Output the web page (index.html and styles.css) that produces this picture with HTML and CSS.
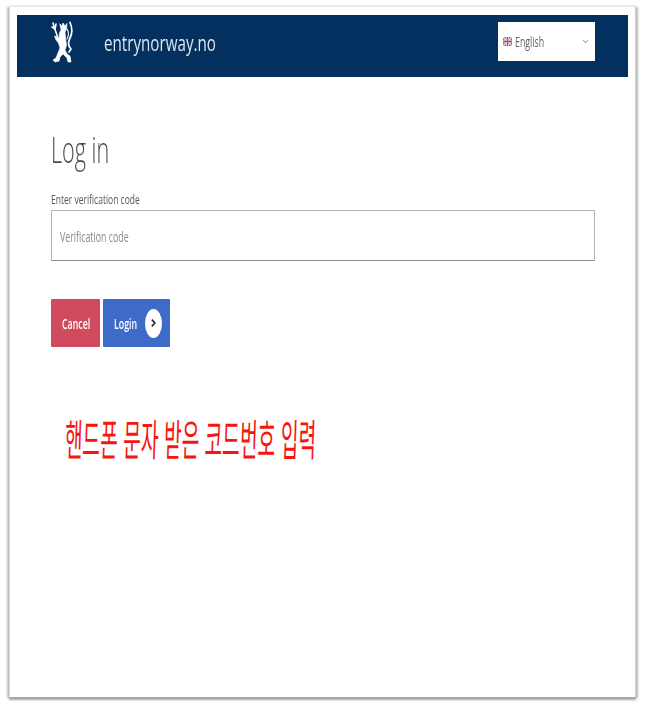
FILE: index.html
```html
<!DOCTYPE html>
<html lang="en">
<head>
<meta charset="utf-8">
<title>entrynorway.no</title>
<link rel="stylesheet" href="styles.css">
</head>
<body>
<main class="frame">
  <header class="topbar">
    <div class="brand">
      <svg class="lion" viewBox="0 0 22 43" aria-hidden="true">
        <g fill="none" stroke="#fff" stroke-linecap="round" stroke-linejoin="round">
          <path d="M2 2 L3.5 7 L7 17 L11 28" stroke-width="1.6"/>
          <path d="M1 6 L4 8 L5 3" stroke-width="1.6"/>
          <path d="M19 1.5 C21.5 7 21.5 12 19 17 C16.5 22 17 25 20 28 L18 31" stroke-width="1.7"/>
          <path d="M16 8 C18 11 18 14 16 18" stroke-width="1.1"/>
          <path d="M9 3 L11 5 L12 2 L14 5 L16 2.5 L15.5 8 L14 11 L14.5 17 L15.5 24 L14 29 L16 33 L19 35 L20 41 L17 41 L16 37 L12 33 L9 36 L8 40 L4 41 L2 39 L5 37 L7 32 L9 27 L7.5 22 L5 19 L3.5 15 L6 16 L8 18 L8.5 12 L10 9 Z" fill="#fff" stroke-width=".7"/>
        </g>
      </svg>
      <span class="site">entrynorway.no</span>
    </div>
    <div class="lang">
      <span class="lang-name">
        <svg class="flag" viewBox="0 0 10 10" aria-hidden="true">
          <rect width="10" height="10" fill="#6f70ad"/>
          <path d="M0 0 L10 10 M10 0 L0 10" stroke="#e9dfe6" stroke-width="1.4"/>
          <path d="M5 0 V10 M0 5 H10" stroke="#f1e8ee" stroke-width="3"/>
          <path d="M5 0 V10 M0 5 H10" stroke="#c8405a" stroke-width="1.4"/>
        </svg><span class="squeeze">English</span>
      </span>
      <svg class="chev" viewBox="0 0 8 6" aria-hidden="true"><path d="M1.2 1.5 L4 4.4 L6.8 1.5" fill="none" stroke="#6d7480" stroke-width="1.1"/></svg>
    </div>
  </header>

  <section class="content">
    <h1 class="title"><span class="squeeze">Log in</span></h1>
    <label class="label" for="code"><span class="squeeze">Enter verification code</span></label>
    <div class="field" id="code"><span class="squeeze">Verification code</span></div>
    <div class="actions">
      <button class="btn cancel" type="button"><span class="squeeze">Cancel</span></button>
      <button class="btn login" type="button">
        <span class="squeeze login-text">Login</span>
        <span class="go"><svg viewBox="0 0 8 12" aria-hidden="true"><path d="M2 2 L5.6 6 L2 10" fill="none" stroke="#1c2a44" stroke-width="2"/></svg></span>
      </button>
    </div>
    <p class="note" lang="ko"><span class="note-text">핸드폰 문자 받은 코드번호 입력</span></p>
  </section>
</main>
</body>
</html>
```

FILE: styles.css
```css
* { box-sizing: border-box; }

html, body { margin: 0; height: 100%; background: #fff; }

body {
  padding: 6px 9px 12px 9px;
  font-family: "Open Sans", "Noto Sans", sans-serif;
  color: #555;
  overflow: hidden;
}

.frame {
  width: 627px;
  height: 691px;
  padding: 8px 8px 0 7px;
  background: #fff;
  border-left: 1px solid #d8d8d8;
  border-top: 1px solid #ececec;
  border-right: 1px solid #cfcfcf;
  box-shadow: 0 3px 2px #a6a6a6, 2px 1px 2px #c4c4c4, -2px 1px 2px #c8c8c8, 0 -1px 1px #efefef;
}

.squeeze {
  display: inline-block;
  transform: scaleX(.63);
  transform-origin: left center;
  white-space: nowrap;
}

.topbar {
  height: 62px;
  background: #03305f;
  display: flex;
  align-items: flex-start;
  justify-content: space-between;
  padding: 7px 33px 0 34px;
  margin-right: -1px;
}

.brand { display: flex; align-items: flex-start; }

.lion { width: 22px; height: 43px; margin-top: -1px; filter: blur(.4px); flex: none; }

.site {
  margin: 5px 0 0 31px;
  color: #dfe6ee;
  font-size: 22px;
  line-height: 30px;
  display: inline-block;
  transform: scaleX(.69);
  transform-origin: left center;
  filter: blur(.3px);
}

.lang {
  width: 97px;
  height: 39px;
  background: #fff;
  display: flex;
  align-items: center;
  justify-content: space-between;
  padding: 0 6px 0 5px;
}

.lang-name { display: flex; align-items: center; font-size: 14px; color: #5d6268; width: 70px; }

.flag { width: 9px; height: 9px; margin-right: 3px; flex: none; }

.chev { width: 7px; height: 5px; flex: none; }

.content { padding: 0 32px 0 34px; }

.title {
  margin: 51px 0 0;
  font-size: 36px;
  line-height: 44px;
  font-weight: 300;
  color: #4a4a4a;
}

.title .squeeze { transform: scaleX(.6); }

.label {
  display: block;
  margin-top: 18px;
  font-size: 13.5px;
  line-height: 18px;
  color: #555;
}

.field {
  height: 51px;
  margin-top: 2px;
  padding: 2px 8px 0;
  border: 1px solid #b5b5b5;
  border-bottom-color: #8e8e8e;
  display: flex;
  align-items: center;
  font-size: 14px;
  color: #8a8a8a;
}

.actions { display: flex; gap: 3px; margin-top: 38px; }

.btn {
  height: 48px;
  border: 0;
  border-radius: 1px;
  color: #fff;
  font-family: inherit;
  font-size: 14px;
  font-weight: 600;
  padding: 0;
  display: flex;
  align-items: center;
}

.cancel { width: 49px; background: #d14b5e; padding-left: 11px; }

.login { width: 67px; background: #3f6bc8; padding-left: 11px; }

.login-text { width: 31px; flex: none; }

.go {
  width: 17px;
  height: 29px;
  border-radius: 50%;
  background: #fff;
  display: flex;
  align-items: center;
  justify-content: center;
}

.go svg { width: 7px; height: 10px; }

.note { margin: 65px 0 0 14px; height: 60px; }

.note-text {
  display: inline-block;
  font-family: "Noto Sans CJK KR", sans-serif;
  font-size: 30px;
  line-height: 50px;
  font-weight: 400;
  color: #f5170f;
  white-space: nowrap;
  transform: scale(.64, 1.45) skewX(-4deg);
  transform-origin: left center;
}
```
